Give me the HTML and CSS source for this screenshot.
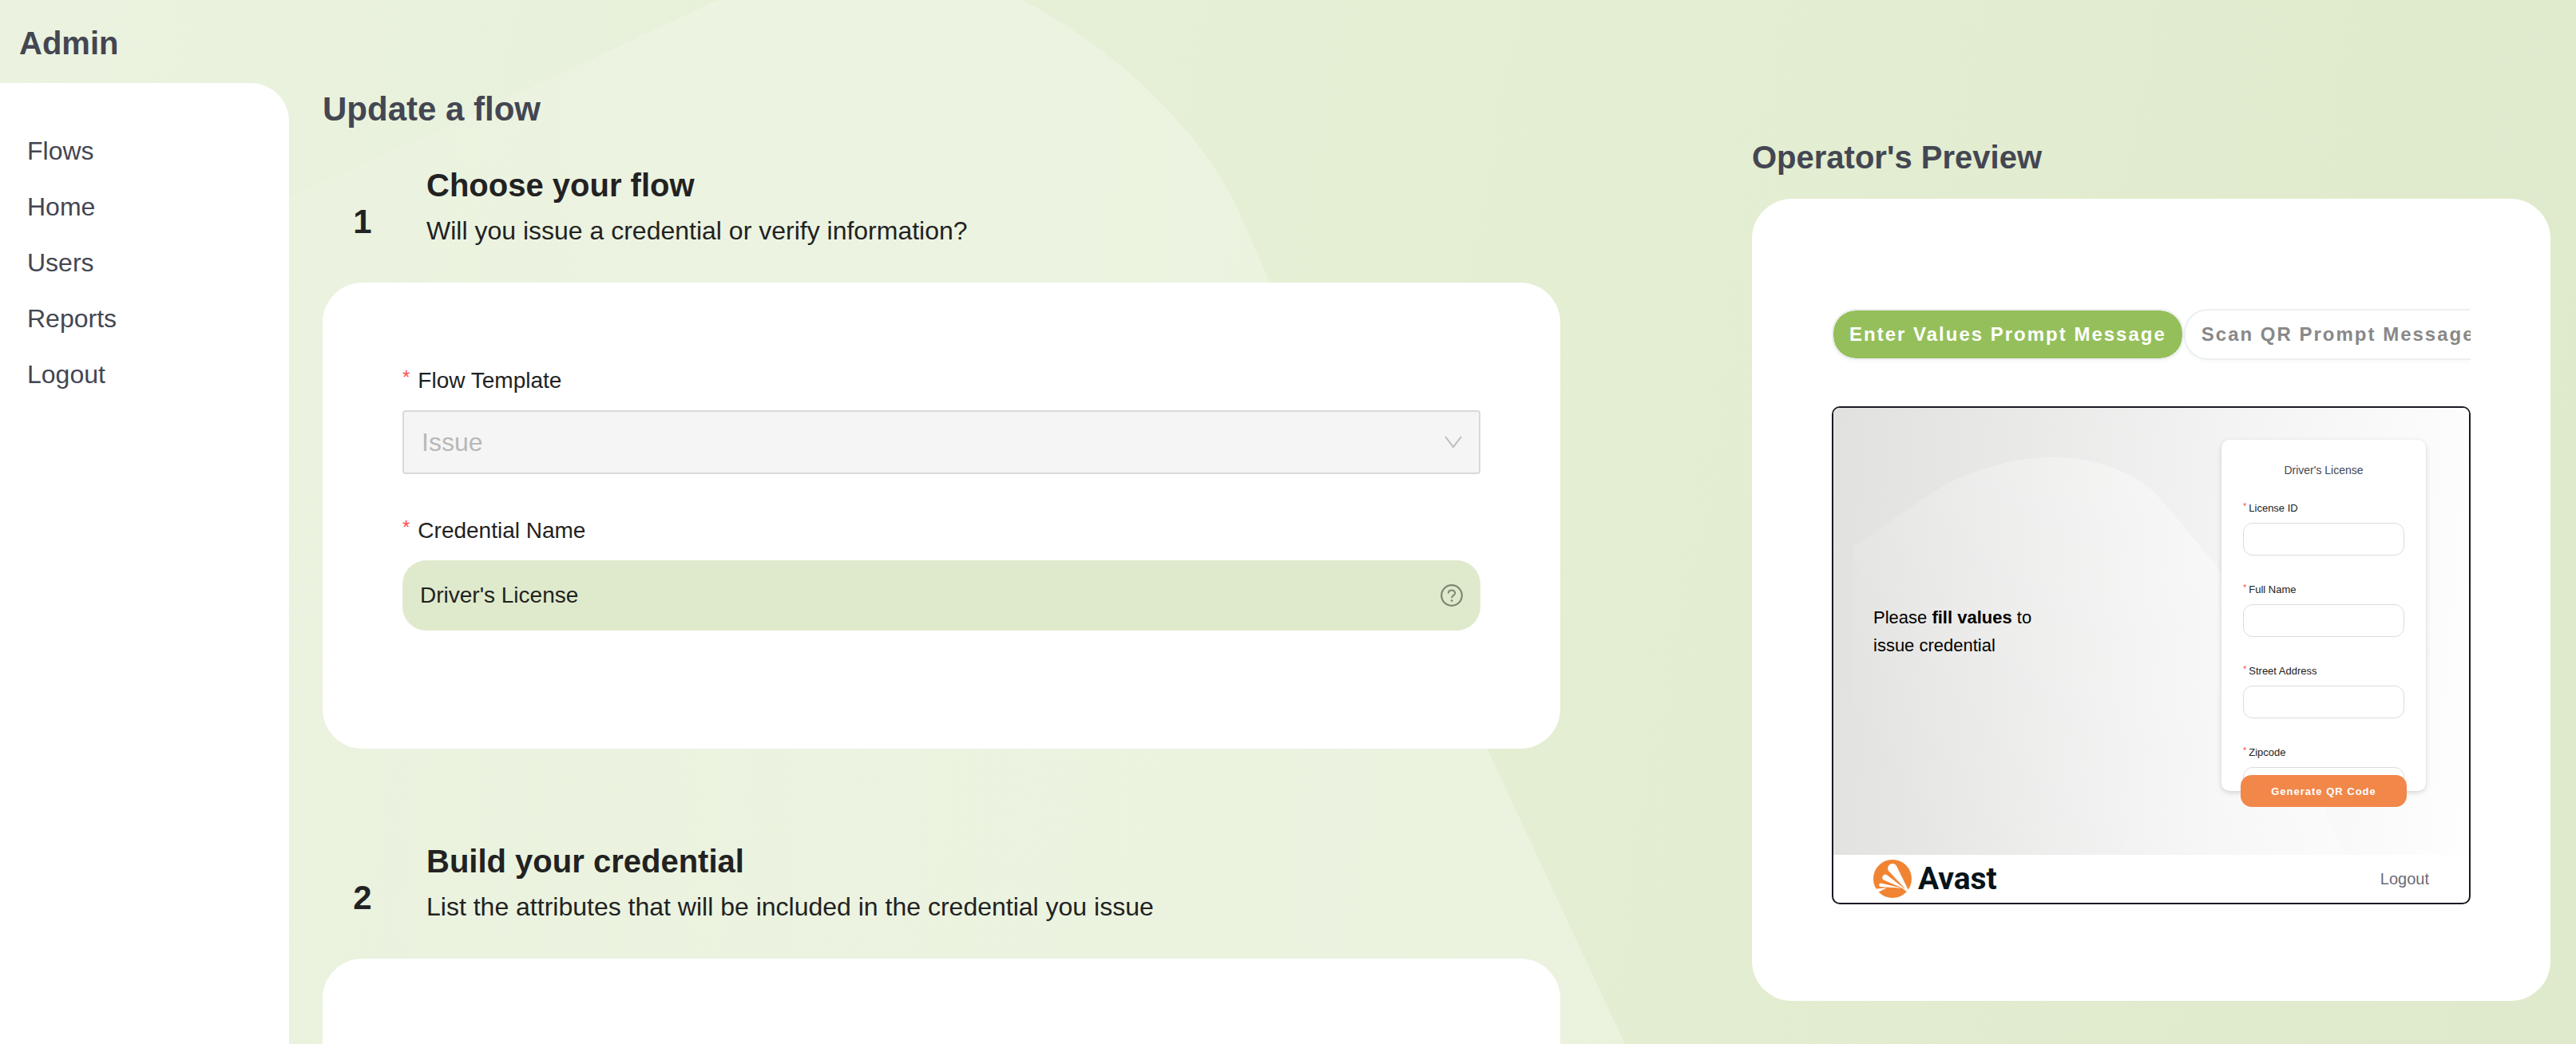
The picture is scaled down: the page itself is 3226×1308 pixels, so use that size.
FILE: index.html
```html
<!DOCTYPE html>
<html lang="en">
<head>
  <meta charset="utf-8">
  <meta name="viewport" content="width=device-width, initial-scale=1">
  <title>Admin - Update a flow</title>
  <link rel="stylesheet" href="styles.css">
</head>
<body>
  <svg class="page-shape" viewBox="0 0 3226 1308" preserveAspectRatio="xMinYMin slice" aria-hidden="true">
    <defs>
      <linearGradient id="pageGlow" x1="0" y1="0" x2="1" y2="0">
        <stop offset="0" stop-color="#fff" stop-opacity=".06"/>
        <stop offset=".4" stop-color="#fff" stop-opacity=".22"/>
        <stop offset="1" stop-color="#fff" stop-opacity=".3"/>
      </linearGradient>
    </defs>
    <path fill="url(#pageGlow)" d="M300 274 L568 155 L899 0 H1280 C1400 62 1505 165 1550 262 L1590 354 L2035 1308 H300 Z"/>
  </svg>

  <header class="topbar"><span class="brand">Admin</span></header>

  <div class="layout">
    <nav class="sidebar">
      <a href="#">Flows</a>
      <a href="#">Home</a>
      <a href="#">Users</a>
      <a href="#">Reports</a>
      <a href="#">Logout</a>
    </nav>

    <main class="editor">
      <h1 class="page-title">Update a flow</h1>

      <section class="step">
        <div class="step-head">
          <span class="step-number">1</span>
          <div class="step-text">
            <h2>Choose your flow</h2>
            <p>Will you issue a credential or verify information?</p>
          </div>
        </div>
        <form class="card">
          <div class="field">
            <label for="template"><span class="star">*</span>Flow Template</label>
            <div class="control">
              <select id="template" class="template" disabled><option>Issue</option></select>
              <svg class="chevron" viewBox="0 0 22 16" aria-hidden="true"><path d="M1 1 L11 14 L21 1" fill="none" stroke="#bdbdbd" stroke-width="2"/></svg>
            </div>
          </div>
          <div class="field">
            <label for="credential"><span class="star">*</span>Credential Name</label>
            <div class="control">
              <input id="credential" class="credential" type="text" value="Driver's License">
              <svg class="help" viewBox="0 0 28 28" aria-hidden="true">
                <circle cx="14" cy="14" r="12.8" fill="none" stroke="#7e8772" stroke-width="2.2"/>
                <path d="M9.8 11.4 C9.8 6.2 18.2 6.2 18.2 11.2 C18.2 14 14.1 13.9 14.1 17.2" fill="none" stroke="#7e8772" stroke-width="2"/>
                <circle cx="14.1" cy="20.6" r="1.4" fill="#7e8772"/>
              </svg>
            </div>
          </div>
        </form>
      </section>

      <section class="step step-last">
        <div class="step-head">
          <span class="step-number">2</span>
          <div class="step-text">
            <h2>Build your credential</h2>
            <p>List the attributes that will be included in the credential you issue</p>
          </div>
        </div>
        <div class="card card-open"></div>
      </section>
    </main>

    <aside class="preview">
      <h2 class="preview-title">Operator's Preview</h2>
      <div class="preview-card">
        <div class="tabs">
          <button type="button" class="tab tab-active">Enter Values Prompt Message</button>
          <button type="button" class="tab">Scan QR Prompt Message</button>
        </div>

        <div class="screen">
          <div class="screen-body">
            <svg class="screen-shape" viewBox="0 0 796 560" preserveAspectRatio="none" aria-hidden="true">
              <defs>
                <linearGradient id="screenGlow" x1="0" y1=".7" x2=".8" y2=".3">
                  <stop offset="0" stop-color="#fff" stop-opacity="0"/>
                  <stop offset="1" stop-color="#fff" stop-opacity=".4"/>
                </linearGradient>
              </defs>
              <path fill="url(#screenGlow)" d="M24 174 L141 95 C190 72 235 62 277 62 C320 62 370 76 401 105 C430 135 455 170 484 203 L640 560 H24 Z"/>
            </svg>
            <p class="prompt">Please <b>fill values</b> to issue credential</p>
            <form class="mini">
              <div class="mini-card">
                <h3>Driver's License</h3>
                <div class="mini-field">
                  <label for="licenseId"><span class="mini-star">*</span>License ID</label>
                  <input id="licenseId" type="text">
                </div>
                <div class="mini-field">
                  <label for="fullName"><span class="mini-star">*</span>Full Name</label>
                  <input id="fullName" type="text">
                </div>
                <div class="mini-field">
                  <label for="street"><span class="mini-star">*</span>Street Address</label>
                  <input id="street" type="text">
                </div>
                <div class="mini-field">
                  <label for="zipcode"><span class="mini-star">*</span>Zipcode</label>
                  <input id="zipcode" type="text">
                </div>
              </div>
              <button type="button" class="mini-submit">Generate QR Code</button>
            </form>
          </div>
          <footer class="screen-foot">
            <div class="logo">
              <svg class="logo-mark" viewBox="0 0 48 48" aria-hidden="true">
                <circle cx="24" cy="24" r="24" fill="#f08433"/>
                <path fill="#fff" d="M18.8 13.8 A5.8 5.8 0 0 1 29.2 8.2 L43.6 37.6 L42.4 39.2 Z"/>
                <path fill="#fff" d="M13 25.6 A3.8 3.8 0 0 1 17.4 19.4 L40.5 37.4 Z"/>
                <path fill="#fff" d="M8.8 33.9 A2.3 2.3 0 0 1 9.6 29.4 L36 35.8 Z"/>
                <path fill="#fff" d="M2 36.8 L17 35.2 L7 40.6 L3 42 Z"/>
                <path fill="#fff" d="M36 35.6 L44.4 37.6 L42.2 40.6 Z"/>
              </svg>
              <span class="logo-name">Avast</span>
            </div>
            <a href="#">Logout</a>
          </footer>
        </div>
      </div>
    </aside>
  </div>
</body>
</html>
```
FILE: styles.css
```css
* {
  box-sizing: border-box;
}

body {
  margin: 0;
  min-height: 100vh;
  display: flex;
  flex-direction: column;
  position: relative;
  font-family: "Liberation Sans", Arial, sans-serif;
  color: #222;
  background: linear-gradient(100deg, #ebf3e0 0%, #e4efd4 50%, #dfeacc 100%);
}

h1, h2, h3, p {
  margin: 0;
}

a {
  text-decoration: none;
}

.page-shape {
  position: absolute;
  inset: 0;
  width: 100%;
  height: 100%;
  z-index: -1;
}

.topbar {
  height: 104px;
  padding: 30px 24px 0;
}

.brand {
  display: block;
  font-size: 40px;
  line-height: 48px;
  font-weight: 700;
  color: #444652;
}

.layout {
  flex: 1;
  display: flex;
  padding-right: 32px;
}

/* Sidebar */
.sidebar {
  flex: 0 0 362px;
  display: flex;
  flex-direction: column;
  gap: 22px;
  padding: 61px 34px;
  background: #fff;
  border-top-right-radius: 48px;
}

.sidebar a {
  font-size: 32px;
  line-height: 48px;
  color: #444652;
}

/* Editor column */
.editor {
  flex: 31 1 0;
  min-width: 0;
  display: flex;
  flex-direction: column;
  margin-left: 42px;
  padding-top: 9px;
}

.page-title {
  font-size: 42px;
  line-height: 48px;
  color: #444652;
  margin-bottom: 47px;
}

.step {
  margin-bottom: 117px;
}

.step-last {
  flex: 1;
  display: flex;
  flex-direction: column;
  margin-bottom: 0;
}

.step-head {
  display: flex;
  align-items: flex-end;
  gap: 30px;
  margin-bottom: 41px;
}

.step-number {
  width: 100px;
  padding-bottom: 11px;
  text-align: center;
  font-size: 42px;
  line-height: 48px;
  font-weight: 700;
}

.step-text h2 {
  font-size: 40px;
  line-height: 48px;
  margin-bottom: 9px;
}

.step-text p {
  font-size: 32px;
  line-height: 48px;
}

.card {
  display: flex;
  flex-direction: column;
  gap: 54px;
  padding: 107px 100px 148px;
  background: #fff;
  border-radius: 50px;
}

.card-open {
  flex: 1;
  padding: 0;
  min-height: 107px;
  border-radius: 50px 50px 0 0;
}

.field {
  display: flex;
  flex-direction: column;
  gap: 21px;
}

.field + .field {
  margin-top: 1px;
}

.field label {
  display: flex;
  align-items: flex-start;
  gap: 10px;
  font-size: 28px;
  line-height: 32px;
}

.star {
  font-size: 24px;
  line-height: 24px;
  color: #ff4d4f;
}

.control {
  position: relative;
}

.template,
.credential {
  display: block;
  width: 100%;
  font-family: inherit;
}

.template {
  height: 80px;
  padding: 0 60px 0 22px;
  appearance: none;
  border: 2px solid #d9d9d9;
  border-radius: 4px;
  background: #f5f5f5;
  color: #b8b8b8;
  font-size: 32px;
  opacity: 1;
}

.credential {
  height: 88px;
  padding: 0 60px 0 22px;
  border: 0;
  border-radius: 30px;
  background: #dfeacc;
  color: #222;
  font-size: 28px;
}

.chevron {
  position: absolute;
  right: 23px;
  top: 32px;
  width: 22px;
  height: 16px;
}

.help {
  position: absolute;
  right: 22px;
  top: 30px;
  width: 28px;
  height: 28px;
}

/* Preview column */
.preview {
  flex: 20 1 0;
  min-width: 0;
  margin-left: 240px;
  padding-top: 69px;
}

.preview-title {
  font-size: 40px;
  line-height: 48px;
  color: #444652;
  margin-bottom: 28px;
}

.preview-card {
  padding: 138px 100px 121px;
  background: #fff;
  border-radius: 50px;
}

.tabs {
  display: flex;
  overflow-x: clip;
  margin-bottom: 58px;
}

.tab {
  flex: none;
  height: 64px;
  padding: 0 20px;
  border: 2px solid #eceff1;
  border-radius: 30px;
  background: #fff;
  box-shadow: 0 4px 0 #fafbfc;
  font-family: inherit;
  font-size: 24px;
  font-weight: 700;
  letter-spacing: 2px;
  white-space: nowrap;
  color: #888;
}

.tab-active {
  background: #95bf5a;
  background-clip: padding-box;
  color: #fff;
}

.screen {
  border: 2px solid #1b1a24;
  border-radius: 10px;
  overflow: hidden;
  background: #fff;
}

.screen-body {
  position: relative;
  display: flex;
  justify-content: space-between;
  align-items: center;
  padding: 0 54px 0 50px;
  background: linear-gradient(95deg, #e1e1df 0%, #e9e9e8 28%, #f4f4f4 62%, #fefefe 100%);
}

.screen-shape {
  position: absolute;
  inset: 0;
  width: 100%;
  height: 100%;
}

.prompt {
  position: relative;
  max-width: 230px;
  font-size: 22px;
  line-height: 35px;
  color: #000;
}

.mini {
  position: relative;
  display: flex;
  flex-direction: column;
  align-items: center;
  width: 256px;
  margin: 40px 0 60px;
}

.mini-card {
  width: 100%;
  height: 440px;
  padding: 26px 27px 0;
  overflow: hidden;
  background: #fff;
  border-radius: 10px;
  box-shadow: 0 2px 6px rgba(0, 0, 0, .16);
}

.mini-card h3 {
  font-size: 14px;
  line-height: 24px;
  font-weight: 400;
  text-align: center;
  color: #444652;
  margin-bottom: 28px;
}

.mini-field {
  margin-bottom: 35px;
}

.mini-field label {
  display: flex;
  align-items: flex-start;
  gap: 3px;
  font-size: 13px;
  line-height: 16px;
  margin-bottom: 10px;
}

.mini-star {
  font-size: 11px;
  line-height: 11px;
  color: #ff4d4f;
}

.mini-field input {
  display: block;
  width: 100%;
  height: 41px;
  border: 1px solid #dcdcdc;
  border-radius: 12px;
  background: #fff;
}

.mini-submit {
  width: 208px;
  height: 40px;
  margin-top: -20px;
  padding: 0;
  border: 0;
  border-radius: 14px;
  background: #f2874a;
  font-family: inherit;
  font-size: 13px;
  font-weight: 700;
  letter-spacing: 1px;
  color: #fff;
}

.screen-foot {
  display: flex;
  justify-content: space-between;
  align-items: center;
  height: 60px;
  padding: 0 50px;
}

.screen-foot a {
  font-size: 20px;
  color: #6b6b76;
}

.logo {
  display: flex;
  align-items: center;
  gap: 8px;
}

.logo-mark {
  width: 48px;
  height: 48px;
}

.logo-name {
  font-family: Roboto, sans-serif;
  font-size: 39px;
  line-height: 48px;
  font-weight: 700;
  color: #07141a;
}
```
